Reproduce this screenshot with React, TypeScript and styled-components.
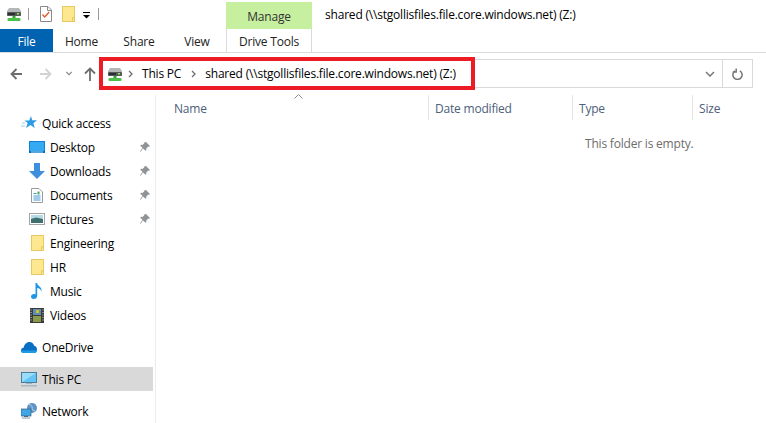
import React from "react";
import styled, { createGlobalStyle } from "styled-components";

const GlobalStyle = createGlobalStyle`
  html, body {
    margin: 0;
    padding: 0;
    background: #fff;
    overflow: hidden;
  }
  body {
    font-family: "Open Sans", "Noto Sans", "Liberation Sans", sans-serif;
    font-size: 12px;
    letter-spacing: -0.2px;
    color: #000;
  }
`;

const DriveIcon = () => (
  <svg width="16" height="16" viewBox="0 0 16 16">
    <path d="M3 2h10l2 3v5H1V5z" fill="#b4b8b9" />
    <rect x="1" y="6" width="14" height="4" rx="1" fill="#55595a" />
    <rect x="2" y="7" width="7" height="2" fill="#2c2f30" />
    <rect x="11" y="7" width="2" height="1.500" fill="#8de35a" />
    <rect x="6.500" y="10" width="3" height="2" fill="#2fa52f" />
    <rect x="1.500" y="12" width="13" height="3" rx="1" fill="#4cc04a" />
  </svg>
);

const CheckDocIcon = () => (
  <svg width="12" height="16" viewBox="0 0 12 16">
    <path d="M.5.500h7.500l3.500 3.500v11.500H.5z" fill="#fff" stroke="#8a8a8a" />
    <path d="M7.500.5v4h4" fill="none" stroke="#8a8a8a" />
    <path d="M2.500 8.500l2.200 2.500 4.500-5" fill="none" stroke="#e2582a" strokeWidth="1.300" />
  </svg>
);

const FolderIcon = () => (
  <svg width="13" height="16" viewBox="0 0 13 16">
    <rect x=".5" y=".5" width="12" height="15" fill="#fde88f" stroke="#e8c860" />
    <path d="M10.500 15.500v-4h2" fill="none" stroke="#e8c860" />
  </svg>
);

const StarIcon = () => (
  <svg width="16" height="14" viewBox="0 0 16 14">
    <path d="M10 0l1.200 4.300H16l-3.600 2.900 1.300 4.800-4.200-2.900-4.500 3 1.700-5.100L3.500 4.600h4.700z" fill="#2e9be6" />
    <path d="M0 10h4M1 7h3" stroke="#9ed0f2" strokeWidth="1" />
  </svg>
);

const DesktopIcon = () => (
  <svg width="16" height="12" viewBox="0 0 16 12">
    <rect x="0" y="0" width="16" height="12" fill="#0f7fd8" />
    <path d="M1 1h14v9H1z" fill="#35a9f2" />
    <rect x="0" y="10" width="16" height="2" fill="#0b6cb8" />
    <rect x="2" y="10.500" width="12" height="1" fill="#a8dcfa" />
  </svg>
);

const DownloadIcon = () => (
  <svg width="16" height="16" viewBox="0 0 16 16">
    <path d="M5 0h6v8h5l-8 8-8-8h5z" fill="#3d8fdd" />
  </svg>
);

const DocumentsIcon = () => (
  <svg width="12" height="15" viewBox="0 0 12 15">
    <path d="M.5.500h7.500l3.500 3.500v10.500h-11z" fill="#fff" stroke="#9a9a9a" />
    <path d="M2.500 5.500h3M2.500 8h7M2.500 10h7M2.500 12h7" stroke="#3f97d8" />
    <path d="M6.500 3.500h2v3h-2z" fill="#46a84a" />
  </svg>
);

const PicturesIcon = () => (
  <svg width="16" height="12" viewBox="0 0 16 12">
    <rect x=".5" y=".5" width="15" height="11" fill="#fff" stroke="#a4a4a4" />
    <rect x="2" y="2" width="12" height="4" fill="#b4dbe8" />
    <path d="M2 6l5-1.500 7 1.500v4H2z" fill="#3f6f6e" />
  </svg>
);

const MusicIcon = () => (
  <svg width="12" height="16" viewBox="0 0 12 16">
    <path d="M4.500 0h1.500c.3 3 5.500 4 4.500 8.500-.5-2-2.500-3.300-4.300-3.500v8c0 1.800-1.700 3-3.500 3S0 15 0 13.500 1.500 11 3 11c.6 0 1.100.1 1.500.4z" fill="#1e96e6" />
  </svg>
);

const VideosIcon = () => (
  <svg width="14" height="15" viewBox="0 0 14 15">
    <rect width="14" height="15" fill="#3a3a3a" />
    <rect x="3" y="1" width="8" height="6" fill="#5d8fb0" />
    <rect x="3" y="8" width="8" height="6" fill="#8a9a4a" />
    <path d="M6 2h3v3H6z" fill="#d8b93a" />
    <path d="M1 1.500v12M13 1.500v12" stroke="#d8d8d8" strokeDasharray="1 1.500" />
  </svg>
);

const CloudIcon = () => (
  <svg width="16" height="11" viewBox="0 0 16 11">
    <path d="M2.500 11C1 11 0 10 0 8.500 0 7 1 6 2.600 5.800 3.200 2.500 5.500 0 8.500 0c2.300 0 4 1.400 4.700 3.700C15 4 16 5.600 16 7.500 16 9.500 14.800 11 13 11z" fill="#0a6ec4" />
    <path d="M2.500 11C1 11 0 10 0 8.500h16C16 9.800 14.800 11 13 11z" fill="#1e9be6" />
  </svg>
);

const MonitorIcon = () => (
  <svg width="16" height="15" viewBox="0 0 16 15">
    <rect x=".5" y=".5" width="15" height="10" fill="#62c4f7" stroke="#4a7f9c" />
    <path d="M1 1h14L1 10z" fill="#9bdcfb" />
    <rect x="5" y="11" width="6" height="1" fill="#9fb3c0" />
    <rect x="0" y="13" width="16" height="1.500" fill="#a8b8c2" />
  </svg>
);

const NetworkIcon = () => (
  <svg width="16" height="16" viewBox="0 0 16 16">
    <circle cx="11" cy="5" r="5" fill="#5d94c4" />
    <path d="M8 1.500c2 0 4 2 3 5l3 1.500" stroke="#b9d6ec" fill="none" />
    <rect x="0" y="6" width="10" height="7" fill="#3fa5e6" stroke="#30627f" strokeWidth=".7" />
    <rect x="3" y="13" width="4" height="1" fill="#5a6b75" />
    <rect x="1" y="14.500" width="8" height="1" fill="#8b9aa3" />
  </svg>
);

const PinIcon = () => (
  <svg width="10" height="10" viewBox="0 0 10 10">
    <path d="M6 0l4 4-1 .7-.7-.2-2 2 .1 1.500-.9.800L3 6.400.7 9.700 0 9.300 2.600 6 .2 3.600 1 2.800l1.500.1 2-2-.2-.7z" fill="#8f9498" />
  </svg>
);

const Chevron = () => (
  <svg width="5" height="8" viewBox="0 0 5 8">
    <path d="M1 1l3 3-3 3" fill="none" stroke="#6e6e6e" strokeWidth="1.300" />
  </svg>
);

const sidebarItems = [
  { label: "Desktop", icon: <DesktopIcon />, pinned: true },
  { label: "Downloads", icon: <DownloadIcon />, pinned: true },
  { label: "Documents", icon: <DocumentsIcon />, pinned: true },
  { label: "Pictures", icon: <PicturesIcon />, pinned: true },
  { label: "Engineering", icon: <FolderIcon /> },
  { label: "HR", icon: <FolderIcon /> },
  { label: "Music", icon: <MusicIcon /> },
  { label: "Videos", icon: <VideosIcon /> },
];

const columns = [
  { label: "Name", width: 273 },
  { label: "Date modified", width: 144 },
  { label: "Type", width: 120 },
  { label: "Size", width: 74 },
];

export default function App() {
  return (
    <Window>
      <GlobalStyle />
      <TitleBar>
        <QuickAccess>
          <QatSlot $left={0}><DriveIcon /></QatSlot>
          <QatSlot $left={6}><Divider /></QatSlot>
          <QatSlot $left={11}><CheckDocIcon /></QatSlot>
          <QatSlot $left={10}><FolderIcon /></QatSlot>
          <QatSlot $left={8} $top={2}>
            <svg width="8" height="7" viewBox="0 0 8 7">
              <rect y="0" width="7" height="1" fill="#000" />
              <path d="M0 3h7L3.500 6.500z" fill="#000" />
            </svg>
          </QatSlot>
          <QatSlot $left={7}><Divider /></QatSlot>
        </QuickAccess>
        <ManageTab>Manage</ManageTab>
        <Title>shared (\\stgollisfiles.file.core.windows.net) (Z:)</Title>
      </TitleBar>
      <Ribbon>
        <FileTab>File</FileTab>
        <RibbonTab $width={57}>Home</RibbonTab>
        <RibbonTab $width={58}>Share</RibbonTab>
        <RibbonTab $width={58}>View</RibbonTab>
        <DriveToolsTab>Drive Tools</DriveToolsTab>
      </Ribbon>
      <AddressRow>
        <NavButtons>
          <NavGlyph $left={0}>
            <svg width="12" height="12" viewBox="0 0 12 12">
              <path d="M12 6H2M6.500 1L1.500 6l5 5" fill="none" stroke="#6d6d6d" strokeWidth="1.800" />
            </svg>
          </NavGlyph>
          <NavGlyph $left={18}>
            <svg width="12" height="12" viewBox="0 0 12 12">
              <path d="M0 6h10M5.500 1l5 5-5 5" fill="none" stroke="#d3d3d3" strokeWidth="1.800" />
            </svg>
          </NavGlyph>
          <NavGlyph $left={14}>
            <svg width="6" height="5" viewBox="0 0 6 5">
              <path d="M.3 1l2.700 2.700L5.700 1" fill="none" stroke="#8a8a8a" strokeWidth="1.300" />
            </svg>
          </NavGlyph>
          <NavGlyph $left={12}>
            <svg width="12" height="14" viewBox="0 0 12 14">
              <path d="M6 14V2M1 6.500l5-5 5 5" fill="none" stroke="#6d6d6d" strokeWidth="1.800" />
            </svg>
          </NavGlyph>
        </NavButtons>
        <AddressBox>
          <Crumbs>
            <DriveIcon />
            <Chevron />
            <Crumb>This PC</Crumb>
            <Chevron />
            <Crumb>shared (\\stgollisfiles.file.core.windows.net) (Z:)</Crumb>
          </Crumbs>
          <AddressEnd>
            <svg width="10" height="6" viewBox="0 0 10 6">
              <path d="M1 1l4 4 4-4" fill="none" stroke="#777" strokeWidth="1.500" />
            </svg>
          </AddressEnd>
          <RefreshButton>
            <svg width="11" height="12" viewBox="0 0 11 12">
              <path d="M3.200 2.800a4.600 4.600 0 1 0 4.600 0" fill="none" stroke="#777" strokeWidth="1.500" />
              <path d="M4.200.4v3.500H.7" fill="none" stroke="#777" strokeWidth="1.500" />
            </svg>
          </RefreshButton>
          <Highlight />
        </AddressBox>
      </AddressRow>
      <Body>
        <Sidebar>
          <SectionRow $top={15}>
            <StarIcon />
            <span>Quick access</span>
          </SectionRow>
          {sidebarItems.map((item) => (
            <NavItem key={item.label}>
              <IconSlot>{item.icon}</IconSlot>
              <NavLabel>{item.label}</NavLabel>
              {item.pinned && <PinIcon />}
            </NavItem>
          ))}
          <SectionRow $top={8}>
            <CloudIcon />
            <span>OneDrive</span>
          </SectionRow>
          <SectionRow $top={8} $selected>
            <MonitorIcon />
            <span>This PC</span>
          </SectionRow>
          <SectionRow $top={8}>
            <NetworkIcon />
            <span>Network</span>
          </SectionRow>
        </Sidebar>
        <Content>
          <HeaderRow>
            <SortCaret width="9" height="5" viewBox="0 0 9 5">
              <path d="M.5 4.500l4-4 4 4" fill="none" stroke="#8a8a8a" />
            </SortCaret>
            {columns.map((col) => (
              <ColumnHead key={col.label} $width={col.width}>
                {col.label}
              </ColumnHead>
            ))}
          </HeaderRow>
          <EmptyNote>This folder is empty.</EmptyNote>
        </Content>
      </Body>
    </Window>
  );
}

const Window = styled.div`
  width: 766px;
  height: 423px;
  display: flex;
  flex-direction: column;
  overflow: hidden;
  background: #fff;
`;

const TitleBar = styled.div`
  height: 29px;
  display: flex;
  align-items: flex-end;
  flex-shrink: 0;
`;

const QuickAccess = styled.div`
  width: 226px;
  height: 27px;
  box-sizing: border-box;
  padding: 0 0 3px 6px;
  display: flex;
  align-items: center;
`;

const QatSlot = styled.span<{ $left: number; $top?: number }>`
  display: flex;
  align-items: center;
  margin-left: ${(p) => p.$left}px;
  margin-top: ${(p) => p.$top ?? 0}px;
`;

const Divider = styled.span`
  width: 1px;
  height: 12px;
  background: #9a9a9a;
`;

const ManageTab = styled.div`
  width: 86px;
  height: 27px;
  padding-top: 2px;
  box-sizing: border-box;
  background: #c6efa0;
  color: #333;
  display: flex;
  align-items: center;
  justify-content: center;
`;

const Title = styled.div`
  align-self: center;
  margin-left: 13px;
`;

const Ribbon = styled.div`
  height: 24px;
  display: flex;
  flex-shrink: 0;
  box-sizing: border-box;
  border-bottom: 1px solid #dadbdc;
`;

const FileTab = styled.div`
  width: 53px;
  height: 23px;
  background: #0063b1;
  color: #fff;
  display: flex;
  align-items: center;
  justify-content: center;
  padding-top: 1px;
  box-sizing: border-box;
`;

const RibbonTab = styled.div<{ $width: number }>`
  width: ${(p) => p.$width}px;
  display: flex;
  align-items: center;
  justify-content: center;
  padding-top: 1px;
  box-sizing: border-box;
  color: #222;
`;

const DriveToolsTab = styled.div`
  width: 86px;
  height: 23px;
  box-sizing: border-box;
  padding-top: 1px;
  background: #fff;
  border-left: 1px solid #dadbdc;
  border-right: 1px solid #dadbdc;
  display: flex;
  align-items: center;
  justify-content: center;
  color: #222;
`;

const AddressRow = styled.div`
  height: 42px;
  display: flex;
  align-items: flex-start;
  flex-shrink: 0;
  padding-top: 6px;
  box-sizing: border-box;
`;

const NavButtons = styled.div`
  width: 100px;
  height: 29px;
  box-sizing: border-box;
  padding-left: 10px;
  display: flex;
  align-items: center;
`;

const NavGlyph = styled.span<{ $left: number }>`
  display: flex;
  margin-left: ${(p) => p.$left}px;
`;

const AddressBox = styled.div`
  position: relative;
  width: 653px;
  height: 29px;
  box-sizing: border-box;
  border: 1px solid #d9d9d9;
  display: flex;
  align-items: center;
`;

const Crumbs = styled.div`
  flex: 1;
  display: flex;
  align-items: center;
  gap: 5px;
  padding-left: 6px;
`;

const Crumb = styled.span`
  margin: 0 5px 0 4px;
  white-space: nowrap;
`;

const AddressEnd = styled.div`
  width: 24px;
  display: flex;
  justify-content: center;
`;

const RefreshButton = styled.div`
  width: 30px;
  height: 27px;
  box-sizing: border-box;
  border-left: 1px solid #d9d9d9;
  display: flex;
  align-items: center;
  justify-content: center;
`;

const Highlight = styled.div`
  position: absolute;
  left: -2px;
  top: -3px;
  width: 376px;
  height: 33px;
  box-sizing: border-box;
  border: 4px solid #ed1c24;
`;

const Body = styled.div`
  flex: 1;
  display: flex;
  min-height: 0;
`;

const Sidebar = styled.div`
  width: 156px;
  flex-shrink: 0;
  box-sizing: border-box;
  border-right: 1px solid #ececec;
  padding-top: 1px;
`;

const SectionRow = styled.div<{ $top: number; $selected?: boolean }>`
  width: 153px;
  height: 24px;
  margin-top: ${(p) => p.$top}px;
  box-sizing: border-box;
  padding-left: 21px;
  display: flex;
  align-items: center;
  gap: 5px;
  background: ${(p) => (p.$selected ? "#d9d9d9" : "transparent")};
`;

const NavItem = styled.div`
  width: 153px;
  height: 24px;
  box-sizing: border-box;
  padding-left: 29px;
  padding-right: 3px;
  display: flex;
  align-items: center;
`;

const IconSlot = styled.span`
  width: 16px;
  display: flex;
  justify-content: center;
  margin-right: 5px;
`;

const NavLabel = styled.span`
  flex: 1;
`;

const Content = styled.div`
  flex: 1;
  min-width: 0;
`;

const HeaderRow = styled.div`
  position: relative;
  display: flex;
  height: 25px;
`;

const SortCaret = styled.svg`
  position: absolute;
  left: 138px;
  top: -1px;
`;

const ColumnHead = styled.div<{ $width: number }>`
  width: ${(p) => p.$width}px;
  flex-shrink: 0;
  box-sizing: border-box;
  padding: 1px 0 0 18px;
  color: #4c607a;
  display: flex;
  align-items: center;
  border-right: 1px solid #e5e5e5;

  & ~ & {
    padding-left: 6px;
  }
`;

const EmptyNote = styled.div`
  margin: 15px 0 0 429px;
  color: #6d6d6d;
  white-space: nowrap;
`;
